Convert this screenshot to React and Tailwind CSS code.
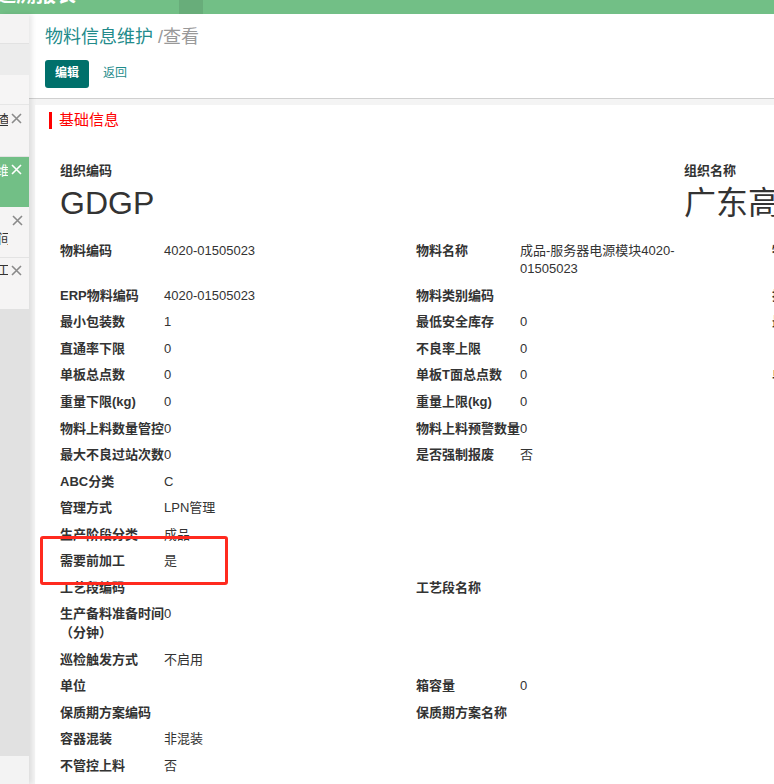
import React from "react";

const FONT = {
  fontFamily: '"Liberation Sans", "Noto Sans CJK SC", sans-serif',
};

const rows = [
  ["物料编码", "4020-01505023", "物料名称", "成品-服务器电源模块4020-01505023", "物料规格"],
  ["ERP物料编码", "4020-01505023", "物料类别编码", "", "批次规则"],
  ["最小包装数", "1", "最低安全库存", "0", "最大库存"],
  ["直通率下限", "0", "不良率上限", "0", ""],
  ["单板总点数", "0", "单板T面总点数", "0", "单板B面总点数"],
  ["重量下限(kg)", "0", "重量上限(kg)", "0", ""],
  ["物料上料数量管控", "0", "物料上料预警数量", "0", ""],
  ["最大不良过站次数", "0", "是否强制报废", "否", ""],
  ["ABC分类", "C", "", "", ""],
  ["管理方式", "LPN管理", "", "", ""],
  ["生产阶段分类", "成品", "", "", ""],
  ["需要前加工", "是", "", "", ""],
  ["工艺段编码", "", "工艺段名称", "", ""],
  ["生产备料准备时间（分钟）", "0", "", "", ""],
  ["巡检触发方式", "不启用", "", "", ""],
  ["单位", "", "箱容量", "0", ""],
  ["保质期方案编码", "", "保质期方案名称", "", ""],
  ["容器混装", "非混装", "", "", ""],
  ["不管控上料", "否", "", "", ""],
];

function Close({ white }) {
  return (
    <svg width="11" height="11" viewBox="0 0 11 11" className="shrink-0">
      <path
        d="M1 1L10 10M10 1L1 10"
        stroke={white ? "#ffffff" : "#8a8a8a"}
        strokeWidth="1.6"
      />
    </svg>
  );
}

function Field({ label, value }) {
  return (
    <div className="flex w-[356px] items-start py-1">
      <div className="w-[104px] shrink-0 font-bold text-[#333]">{label}</div>
      <div className="w-[200px] text-[#333]">{value}</div>
    </div>
  );
}

export default function App() {
  return (
    <div
      className="h-[784px] w-[774px] overflow-hidden bg-white text-[13px] leading-[1.42857]"
      style={FONT}
    >
      {/* top bar, mostly scrolled out */}
      <div className="flex h-[14px] items-start overflow-hidden bg-[#72bf86] text-white">
        <span className="-ml-[4px] -mt-[17px] w-[183px] shrink-0 text-[20px] font-bold leading-[24px]">
          追溯报表
        </span>
        <span className="h-full w-[24px] shrink-0 bg-[#68ad7a]" />
        <span className="-mt-[18px] ml-[115px] text-[16px] leading-[20px]">人</span>
        <span className="-mt-[18px] ml-[60px] text-[16px] leading-[20px]">追 溯</span>
        <span className="-mt-[18px] ml-[36px] text-[16px] leading-[20px]">人</span>
        <span className="-mt-[18px] ml-[72px] text-[16px] leading-[20px]">人</span>
        <span className="-mt-[18px] ml-[100px] text-[16px] leading-[20px]">人</span>
        <span className="-mt-[18px] ml-[56px] text-[16px] leading-[20px]">人</span>
      </div>

      <div className="flex h-[770px]">
        {/* sidebar tabs (cut at the left) */}
        <aside className="relative z-10 flex w-[29px] shrink-0 flex-col overflow-hidden text-[#333] shadow-[3px_0_5px_rgba(0,0,0,0.09)]">
          <div className="h-[30px] border-b border-[#e2e2e2] bg-[#f4f3f3]" />
          <div className="h-[31px] bg-[#ececec]" />
          <div className="h-[30px] border-b border-[#e6e6e6] bg-[#f6f5f5]" />
          <div className="flex h-[52px] items-start gap-[3px] border-b border-[#e3e3e3] bg-[#f5f4f4] pt-[6px]">
            <span className="-ml-[2px] w-[10px] shrink-0 overflow-hidden">查</span>
            <span className="mt-[2px]">
              <Close />
            </span>
          </div>
          <div className="flex h-[50px] items-start gap-[3px] bg-[#72bf86] pt-[5px] text-white">
            <span className="-ml-[4px] w-[12px] shrink-0 overflow-hidden text-right">维</span>
            <span className="mt-[2px]">
              <Close white />
            </span>
          </div>
          <div className="flex h-[51px] flex-col border-b border-[#e3e3e3] bg-[#f5f4f4] pt-[8px]">
            <span className="ml-[12px]">
              <Close />
            </span>
            <span className="-ml-[2px] mt-[4px] w-[10px] overflow-hidden">间</span>
          </div>
          <div className="flex h-[51px] items-start gap-[3px] bg-[#f5f4f4] pt-[3px]">
            <span className="-ml-[3px] w-[11px] shrink-0 overflow-hidden">工</span>
            <span className="mt-[4px]">
              <Close />
            </span>
          </div>
          <div className="h-[447px] bg-[#e1e1e1]" />
          <div className="flex-1 bg-[#f3f3f3]" />
        </aside>

        <main className="flex min-w-0 flex-1 flex-col bg-[#f4f4f4]">
          <header className="h-[85px] shrink-0 border-b border-[#d0d0d0] bg-white pl-[16px] pt-[11px]">
            <h1 className="text-[18px] font-normal leading-[24px]">
              <span className="text-[#238b8b]">物料信息维护</span>
              <span className="text-[#999]"> /查看</span>
            </h1>
            <div className="mt-[11px] flex items-center gap-[14px]">
              <button
                type="button"
                className="h-[28px] w-[44px] rounded-[3px] bg-[#00706b] text-[12px] font-bold text-white"
              >
                编辑
              </button>
              <button type="button" className="text-[12px] text-[#1f8c8c]">
                返回
              </button>
            </div>
          </header>

          <div className="flex-1 pl-[6px] pt-[6px]">
            <div className="relative h-full overflow-hidden bg-white">
              {/* section title */}
              <div className="flex items-center pl-[14px] pt-[6px]">
                <span className="h-[17px] w-[3px] bg-[#ff0000]" />
                <span className="ml-[7px] text-[15px] leading-[18px] text-[#ff0000]">
                  基础信息
                </span>
              </div>

              {/* organisation */}
              <div className="mt-[33px] flex pl-[25px]">
                <div className="w-[624px] shrink-0">
                  <div className="font-bold text-[#333]">组织编码</div>
                  <div className="mt-[2px] text-[32px] leading-[40px] text-[#333]">GDGP</div>
                </div>
                <div className="w-[400px] shrink-0">
                  <div className="font-bold text-[#333]">组织名称</div>
                  <div className="mt-[2px] whitespace-nowrap text-[32px] leading-[40px] text-[#333]">
                    广东高新电子有限公司
                  </div>
                </div>
              </div>

              {/* fields */}
              <div className="mt-[15px] grid w-max grid-cols-[356px_356px_356px] pl-[25px]">
                {rows.map((r, i) => (
                  <React.Fragment key={i}>
                    <Field label={r[0]} value={r[1]} />
                    <Field label={r[2]} value={r[3]} />
                    <Field label={r[4]} value="" />
                  </React.Fragment>
                ))}
              </div>

              {/* annotation */}
              <div className="absolute left-[5px] top-[431px] h-[49px] w-[188px] rounded-[3px] border-[3px] border-[#ff2a1f]" />
            </div>
          </div>
        </main>
      </div>
    </div>
  );
}
